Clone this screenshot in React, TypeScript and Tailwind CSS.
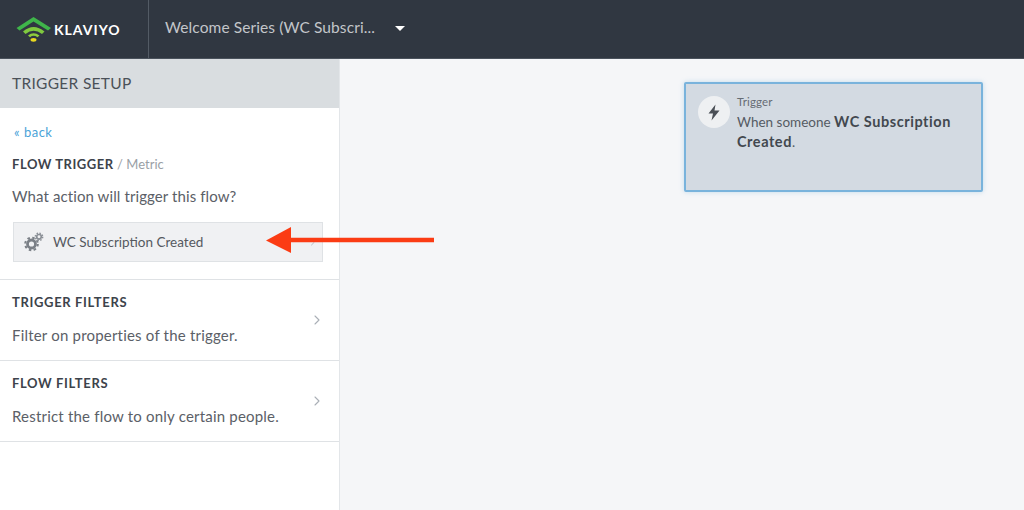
import { ChevronRight } from "lucide-react";

function Logo() {
  return (
    <svg width="36" height="26" viewBox="0 0 36 26" className="shrink-0">
      <path d="M0.5 12 L17.5 1 L35 12 L32 14.5 L17.5 5.5 L3.5 14.5 Z" fill="#3fb54a" />
      <path d="M7 15.5 Q17.5 6.5 28.5 15.5 L26 18 Q17.5 11.5 9.5 18 Z" fill="#7fc93f" />
      <path d="M12 19.5 Q17.5 15 23.5 19.5 L21.500 21.2 Q17.5 18.5 14 21.2 Z" fill="#8fce3c" />
      <ellipse cx="17.5" cy="23.8" rx="3" ry="1.9" fill="#e8d820" />
    </svg>
  );
}

function Gears() {
  return (
    <svg width="20" height="20" viewBox="0 0 20 20" fill="none" className="shrink-0">
      <circle cx="7.500" cy="12" r="4" stroke="#7b8087" strokeWidth="2.800" />
      <circle cx="7.500" cy="12" r="6.300" stroke="#7b8087" strokeWidth="2" strokeDasharray="2.500 2.450" />
      <circle cx="15" cy="4.800" r="2.300" stroke="#8a8f96" strokeWidth="1.700" />
      <circle cx="15" cy="4.800" r="3.700" stroke="#8a8f96" strokeWidth="1.400" strokeDasharray="1.500 1.400" />
    </svg>
  );
}

function FilterRow({ title, text }: { title: string; text: string }) {
  return (
    <div className="relative h-[81px] border-b border-[#dfe2e5] pl-3 pr-3">
      <div className="pt-[13px] text-[13px] leading-[18px] font-bold tracking-[0.65px] text-[#3d434b]">{title}</div>
      <div className="mt-[15px] text-[15px] leading-[18px] tracking-[0.2px] text-[#5b6067]">{text}</div>
      <ChevronRight className="absolute right-[14px] top-[32px] text-[#a9afb6]" size={16} strokeWidth={1.6} />
    </div>
  );
}

export default function App() {
  return (
    <div className="flex h-[510px] w-[1024px] flex-col overflow-hidden bg-[#f5f6f8] font-['Lato','Liberation_Sans',sans-serif]">
      <header className="flex h-[59px] shrink-0 items-center border-b border-[#4a525c] bg-[#303741]">
        <div className="flex h-full w-[149px] shrink-0 items-center gap-[2px] border-r border-[#535b65] pl-[16px]">
          <Logo />
          <span className="text-[14px] font-bold tracking-[1px] text-white">KLAVIYO</span>
        </div>
        <span className="mb-[2px] ml-4 text-[15.500px] tracking-[0.1px] text-[#c3c6ca]">Welcome Series (WC Subscri...</span>
        <span className="ml-[20px] mb-[1px] h-0 w-0 border-x-[5px] border-t-[5px] border-x-transparent border-t-white" />
      </header>
      <div className="flex min-h-0 flex-1">
        <aside className="w-[340px] shrink-0 border-r border-[#e3e6e9] bg-white">
          <div className="flex h-[49px] items-center bg-[#d9dde0] pl-3 text-[15.500px] tracking-[0.3px] text-[#4b5158]">TRIGGER SETUP</div>
          <div className="h-[172px] border-b border-[#dfe2e5] px-3">
            <div className="pl-[2px] pt-4 text-[13px] leading-[16px] tracking-[0.5px] text-[#4aa3d8]">« back</div>
            <div className="mt-[16px] text-[13px] leading-[16px]">
              <span className="font-bold tracking-[0.55px] text-[#3d434b]">FLOW TRIGGER</span>
              <span className="text-[#9a9fa6]"> / Metric</span>
            </div>
            <div className="mt-[15px] text-[15px] leading-[18px] tracking-[0.1px] text-[#5b6067]">What action will trigger this flow?</div>
            <div className="ml-[1px] mt-[17px] flex h-[40px] w-[310px] items-center gap-[9px] border border-[#dfe2e5] bg-[#f0f1f3] pl-[10px] pr-[3px] text-[13.500px] text-[#55595f]">
              <Gears />
              <span>WC Subscription Created</span>
              <ChevronRight className="ml-auto text-[#a9afb6]" size={12} strokeWidth={1.6} />
            </div>
          </div>
          <FilterRow title="TRIGGER FILTERS" text="Filter on properties of the trigger." />
          <FilterRow title="FLOW FILTERS" text="Restrict the flow to only certain people." />
        </aside>
        <main className="relative flex-1">
          <div className="ml-[344px] mt-[23px] flex h-[110px] w-[299px] gap-[7px] rounded-[2px] border-2 border-[#79b3dc] bg-[#d3dae2] pl-[12px] pt-[11px] shadow-[0_0_5px_rgba(121,179,220,0.4)]">
            <div className="mt-[1px] flex h-8 w-8 shrink-0 items-center justify-center rounded-full bg-[#eef0f2]">
              <svg width="14" height="17" viewBox="0 0 14 17" fill="#4a4f56">
                <path d="M8.500 0.500 L1.500 9.500 H6 L4.500 16.500 L12.500 6.500 H7.500 Z" />
              </svg>
            </div>
            <div className="text-[#555b63]">
              <div className="text-[11.500px] leading-[14px] tracking-[0.15px] text-[#666c74]">Trigger</div>
              <div className="mt-[3px] w-[230px] text-[13.500px] leading-[19px]">
                When someone <span className="text-[14.500px] leading-[19px] font-bold tracking-[0.55px] text-[#42484f]">WC Subscription Created</span>.
              </div>
            </div>
          </div>
        </main>
      </div>
      <svg width="170" height="30" viewBox="0 0 170 30" className="absolute left-[266px] top-[226px]">
        <path d="M0 14.500 L25 1 V11.800 H168 V16.200 H25 V27 Z" fill="#fb3c14" />
      </svg>
    </div>
  );
}
